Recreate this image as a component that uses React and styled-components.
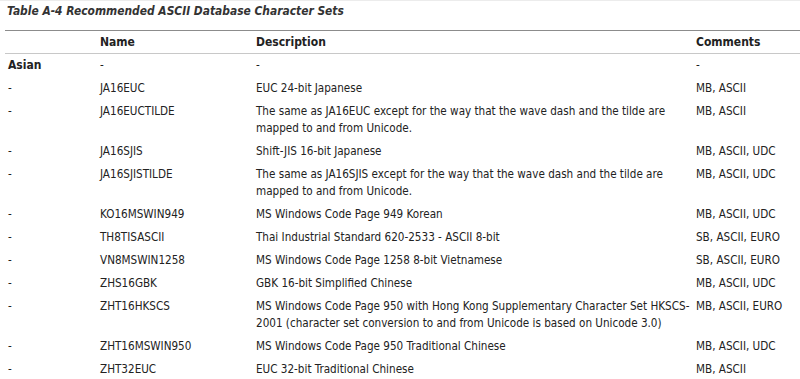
import React from "react";
import styled, { createGlobalStyle } from "styled-components";

const GlobalStyle = createGlobalStyle`
  html, body {
    margin: 0;
    padding: 0;
    background: #fff;
    overflow: hidden;
  }
  body {
    font-family: "DejaVu Sans Condensed", "DejaVu Sans", sans-serif;
    color: #222;
  }
`;

const Page = styled.div`
  border-top: 1px solid #ececec;
  padding: 2px 0 0 5px;
`;

const Caption = styled.div`
  font-size: 11.9px;
  font-weight: bold;
  font-style: italic;
  color: #333;
  line-height: 16px;
  padding-left: 2px;
  margin-bottom: 11px;
`;

const Table = styled.table`
  border-collapse: collapse;
  table-layout: fixed;
  width: 795px;
  font-size: 11.6px;
  line-height: 17px;
`;

const HeadRow = styled.tr`
  border-top: 1px solid #8c8c8c;
  border-bottom: 1px solid #c8c8c8;
`;

const Th = styled.th`
  text-align: left;
  font-weight: bold;
  font-size: 12px;
  color: #222;
  padding: 3px 3px 2px 3px;
  vertical-align: top;
`;

const Td = styled.td`
  padding: 3px 1px 3px 3px;
  vertical-align: top;
  font-weight: ${(p) => (p.$strong ? "bold" : "normal")};
  font-size: ${(p) => (p.$strong ? "12px" : "11.6px")};
`;

const rows = [
  ["Asian", "-", "-", "-", true],
  ["-", "JA16EUC", "EUC 24-bit Japanese", "MB, ASCII"],
  ["-", "JA16EUCTILDE", "The same as JA16EUC except for the way that the wave dash and the tilde are mapped to and from Unicode.", "MB, ASCII"],
  ["-", "JA16SJIS", "Shift-JIS 16-bit Japanese", "MB, ASCII, UDC"],
  ["-", "JA16SJISTILDE", "The same as JA16SJIS except for the way that the wave dash and the tilde are mapped to and from Unicode.", "MB, ASCII, UDC"],
  ["-", "KO16MSWIN949", "MS Windows Code Page 949 Korean", "MB, ASCII, UDC"],
  ["-", "TH8TISASCII", "Thai Industrial Standard 620-2533 - ASCII 8-bit", "SB, ASCII, EURO"],
  ["-", "VN8MSWIN1258", "MS Windows Code Page 1258 8-bit Vietnamese", "SB, ASCII, EURO"],
  ["-", "ZHS16GBK", "GBK 16-bit Simplified Chinese", "MB, ASCII, UDC"],
  ["-", "ZHT16HKSCS", "MS Windows Code Page 950 with Hong Kong Supplementary Character Set HKSCS-2001 (character set conversion to and from Unicode is based on Unicode 3.0)", "MB, ASCII, EURO"],
  ["-", "ZHT16MSWIN950", "MS Windows Code Page 950 Traditional Chinese", "MB, ASCII, UDC"],
  ["-", "ZHT32EUC", "EUC 32-bit Traditional Chinese", "MB, ASCII"],
];

const App = () => {
  return (
    <Page>
      <GlobalStyle />
      <Caption>Table A-4 Recommended ASCII Database Character Sets</Caption>
      <Table>
        <colgroup>
          <col style={{ width: 92 }} />
          <col style={{ width: 156 }} />
          <col style={{ width: 440 }} />
          <col />
        </colgroup>
        <thead>
          <HeadRow>
            <Th></Th>
            <Th>Name</Th>
            <Th>Description</Th>
            <Th>Comments</Th>
          </HeadRow>
        </thead>
        <tbody>
          {rows.map((r, i) => (
            <tr key={i}>
              <Td $strong={r[4]}>{r[0]}</Td>
              <Td>{r[1]}</Td>
              <Td>{r[2]}</Td>
              <Td>{r[3]}</Td>
            </tr>
          ))}
        </tbody>
      </Table>
    </Page>
  );
};

export default App;
